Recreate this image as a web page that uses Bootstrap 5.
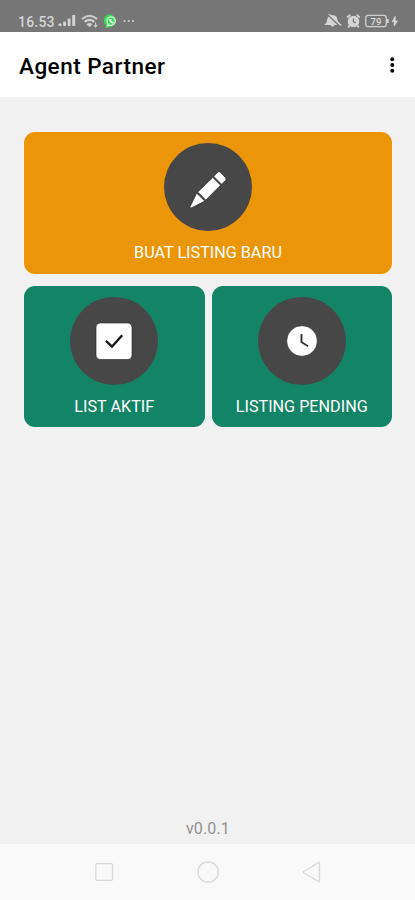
<!DOCTYPE html>
<html lang="id">
<head>
<meta charset="utf-8">
<meta name="viewport" content="width=device-width, initial-scale=1">
<title>Agent Partner</title>
<link href="https://cdn.jsdelivr.net/npm/bootstrap@5.3.0/dist/css/bootstrap.min.css" rel="stylesheet">
<style>
  body { font-family: Roboto, "Liberation Sans", sans-serif; background: #f1f1f1; color: #000; }
  svg { display: block; flex: none; }
  .status-bar { height: 32px; background: #777; color: #d4d4d4; padding: 10px 15px 0 18px; }
  .status-time { font-size: 14px; font-weight: 500; line-height: 20px; letter-spacing: .2px; width: 36px; margin-right: 4px; padding-top: 2px; white-space: nowrap; }
  .app-bar { height: 65px; padding: 3px 18px 0 19px; }
  .app-title { font-size: 22.5px; font-weight: 500; line-height: 30px; letter-spacing: .47px; }
  .tiles { padding: 35px 23px 0 24px; gap: 12px; }
  .tile-pair { gap: 7px; }
  .tile { height: 141.500px; border: 0; border-radius: 11px; padding: 11px 0 0; color: #fff; font-size: 16.2px; line-height: 20px; gap: 12px; }
  .tile-orange { background: #eb9509; }
  .tile-green { background: #138465; }
  .tile-icon { width: 88px; height: 88px; background: #474747; }
  .version { font-size: 16px; line-height: 20px; color: #929292; padding: 0 0 5px 1px; letter-spacing: .15px; }
  .system-nav { height: 56px; background: #f9f9f9; padding: 0 93px; }
</style>
<script src="https://cdn.jsdelivr.net/npm/bootstrap@5.3.0/dist/js/bootstrap.bundle.min.js"></script>
</head>
<body class="vh-100 d-flex flex-column overflow-hidden">
  <div class="status-bar d-flex justify-content-between">
    <div class="d-flex align-items-center">
      <span class="status-time">16.53</span>
      <svg width="18" height="12" viewBox="0 0 18 12" fill="#d2d2d2"><rect x=".5" y="8.5" width="3" height="2.5" rx=".8"/><rect x="5.2" y="6.5" width="2.8" height="4.5" rx=".8"/><rect x="9.7" y="3.5" width="2.8" height="7.5" rx=".8"/><rect x="14.2" y="0" width="3" height="11" rx=".8"/></svg>
      <svg class="ms-1" width="22" height="14" viewBox="-1 0 22 14" fill="none" stroke="#d0d0d0" stroke-width="2.1"><path d="M1 5Q8.500-1.500 16 5M3.600 7.900Q8.500 3.700 13.400 7.900"/><path d="M5.800 10.200Q8.500 8 11.200 10.200L8.500 13Z" fill="#d0d0d0" stroke-width=".5"/><path d="M14.600 8.500v4.500M12.900 11l1.700 2 1.500-2" stroke-width="1.100"/></svg>
      <svg width="17" height="14" viewBox="0 0 17 14"><path d="M5 .8A6.400 6.400 0 1 1 7.500 13.200L3.200 14 4 11A6.400 6.400 0 0 1 5 .8Z" fill="#38dd58"/><path d="M6 9.800A4.200 4.200 0 1 1 8 11.100L5.600 11.600Z" fill="none" stroke="#d8f4dc" stroke-width="1.200"/><path d="M8 5Q8.100 8.200 11.500 9" fill="none" stroke="#e6f9e8" stroke-width="2"/></svg>
      <svg class="ms-1" width="12" height="4" viewBox="1 0 12 4" fill="#d2d2d2"><circle cx="2.500" cy="2" r="1"/><circle cx="6.700" cy="2" r="1"/><circle cx="11" cy="2" r="1"/></svg>
    </div>
    <div class="d-flex align-items-center">
      <svg width="19" height="14" viewBox="0 0 19 14"><path d="M1 11Q4 9 4 6Q5 1.200 9.500 1Q14.500 1.500 14.500 6Q14.500 9 17.500 11H11.500Q9.500 14.500 7.500 11Z" fill="#d4d4d4"/><path d="M4 0L17 12.500" stroke="#777" stroke-width="1.500"/><path d="M5.500-.4L18.200 11.500" stroke="#d4d4d4" stroke-width="1.300"/></svg>
      <svg class="ms-1" width="14" height="14" viewBox="-.5 0 14 14" fill="none"><circle cx="7" cy="7.500" r="5.800" fill="#d4d4d4"/><path d="M.7 3.500L3.800.8M13.300 3.500L10.200.8M3 11.500L1.800 13.500M11 11.500L12.200 13.500" stroke="#d4d4d4" stroke-width="1.800"/><path d="M7 4.500v3.300l2.300 1.200" stroke="#777" stroke-width="1.300"/></svg>
      <svg class="ms-1" width="36" height="14" viewBox="-1 0 36 14"><rect x=".7" y="1.300" width="20.600" height="11.400" rx="2.500" fill="none" stroke="#cfcfcf" stroke-width="1.300"/><rect x="22" y="5" width="1.800" height="4" fill="#cfcfcf"/><text x="11" y="10.500" text-anchor="middle" fill="#dcdcdc" font-size="9.500" font-weight="500" font-family="Roboto, sans-serif">79</text><path d="M30.200 2.500L27.300 7.700H29.500L29.200 12 32.200 6.900H30Z" fill="#d8d8d8" stroke="#d8d8d8" stroke-width=".9"/></svg>
    </div>
  </div>

  <header class="app-bar bg-white d-flex align-items-center justify-content-between">
    <h1 class="app-title mb-0">Agent Partner</h1>
    <svg width="10" height="18" viewBox="0 0 10 18"><circle cx="5.300" cy="2.200" r="1.950"/><circle cx="5.300" cy="8" r="1.950"/><circle cx="5.300" cy="13.800" r="1.950"/></svg>
  </header>

  <main class="tiles flex-grow-1 d-flex flex-column">
    <button class="tile tile-orange w-100 d-flex flex-column align-items-center">
      <span class="tile-icon rounded-circle">
        <svg width="88" height="88" viewBox="0 0 88 88" fill="#fff" stroke="#222" stroke-width=".6" stroke-linejoin="round"><path d="M54.300 28.800Q55.300 28.400 56.100 29.200L61.600 34.700Q62.600 36 61.600 37.200L57.600 41.200 49.800 33.500Z"/><path d="M48.800 34.500L56.500 42.200 41.800 57 33.800 49.100Z"/><path d="M32.700 50.200L40.800 58.100 27.500 64.800Q25.500 65.500 26.200 63.500Z"/></svg>
      </span>
      <span>BUAT LISTING BARU</span>
    </button>
    <div class="tile-pair d-flex">
      <button class="tile tile-green w-50 d-flex flex-column align-items-center">
        <span class="tile-icon rounded-circle">
          <svg width="88" height="88" viewBox="0 0 88 88"><rect x="26" y="26" width="36" height="36.500" rx="4.500" fill="#fff" stroke="#222" stroke-width=".6"/><path d="M36 43.800L42 49.600 52.200 38.300" fill="none" stroke="#181818" stroke-width="2.300"/></svg>
        </span>
        <span>LIST AKTIF</span>
      </button>
      <button class="tile tile-green w-50 d-flex flex-column align-items-center">
        <span class="tile-icon rounded-circle">
          <svg width="88" height="88" viewBox="0 0 88 88"><circle cx="44" cy="44" r="15.300" fill="#fff" stroke="#222" stroke-width=".6"/><path d="M43.500 37V45L50 49.200" fill="none" stroke="#333" stroke-width="1.900"/></svg>
        </span>
        <span>LISTING PENDING</span>
      </button>
    </div>
  </main>

  <div class="version text-center">v0.0.1</div>
  <nav class="system-nav d-flex align-items-center justify-content-between">
    <svg width="22" height="24" viewBox="0 0 22 24" fill="none" stroke="#d8d8d8" stroke-width="1.300"><rect x="2.800" y="3.700" width="16.700" height="16.700" rx="1.500"/></svg>
    <svg width="24" height="24" viewBox="0 0 24 24" fill="none" stroke="#d8d8d8" stroke-width="1.300"><circle cx="12.200" cy="12" r="10.200"/></svg>
    <svg width="22" height="24" viewBox="0 0 22 24" fill="none" stroke="#d8d8d8" stroke-width="1.300" stroke-linejoin="round"><path d="M19.500 3.200V21Q19.500 22 18.500 21.500L3.800 13Q2.800 12.200 3.800 11.500L18.500 2.500Q19.500 2 19.500 3.200Z"/></svg>
  </nav>
</body>
</html>
